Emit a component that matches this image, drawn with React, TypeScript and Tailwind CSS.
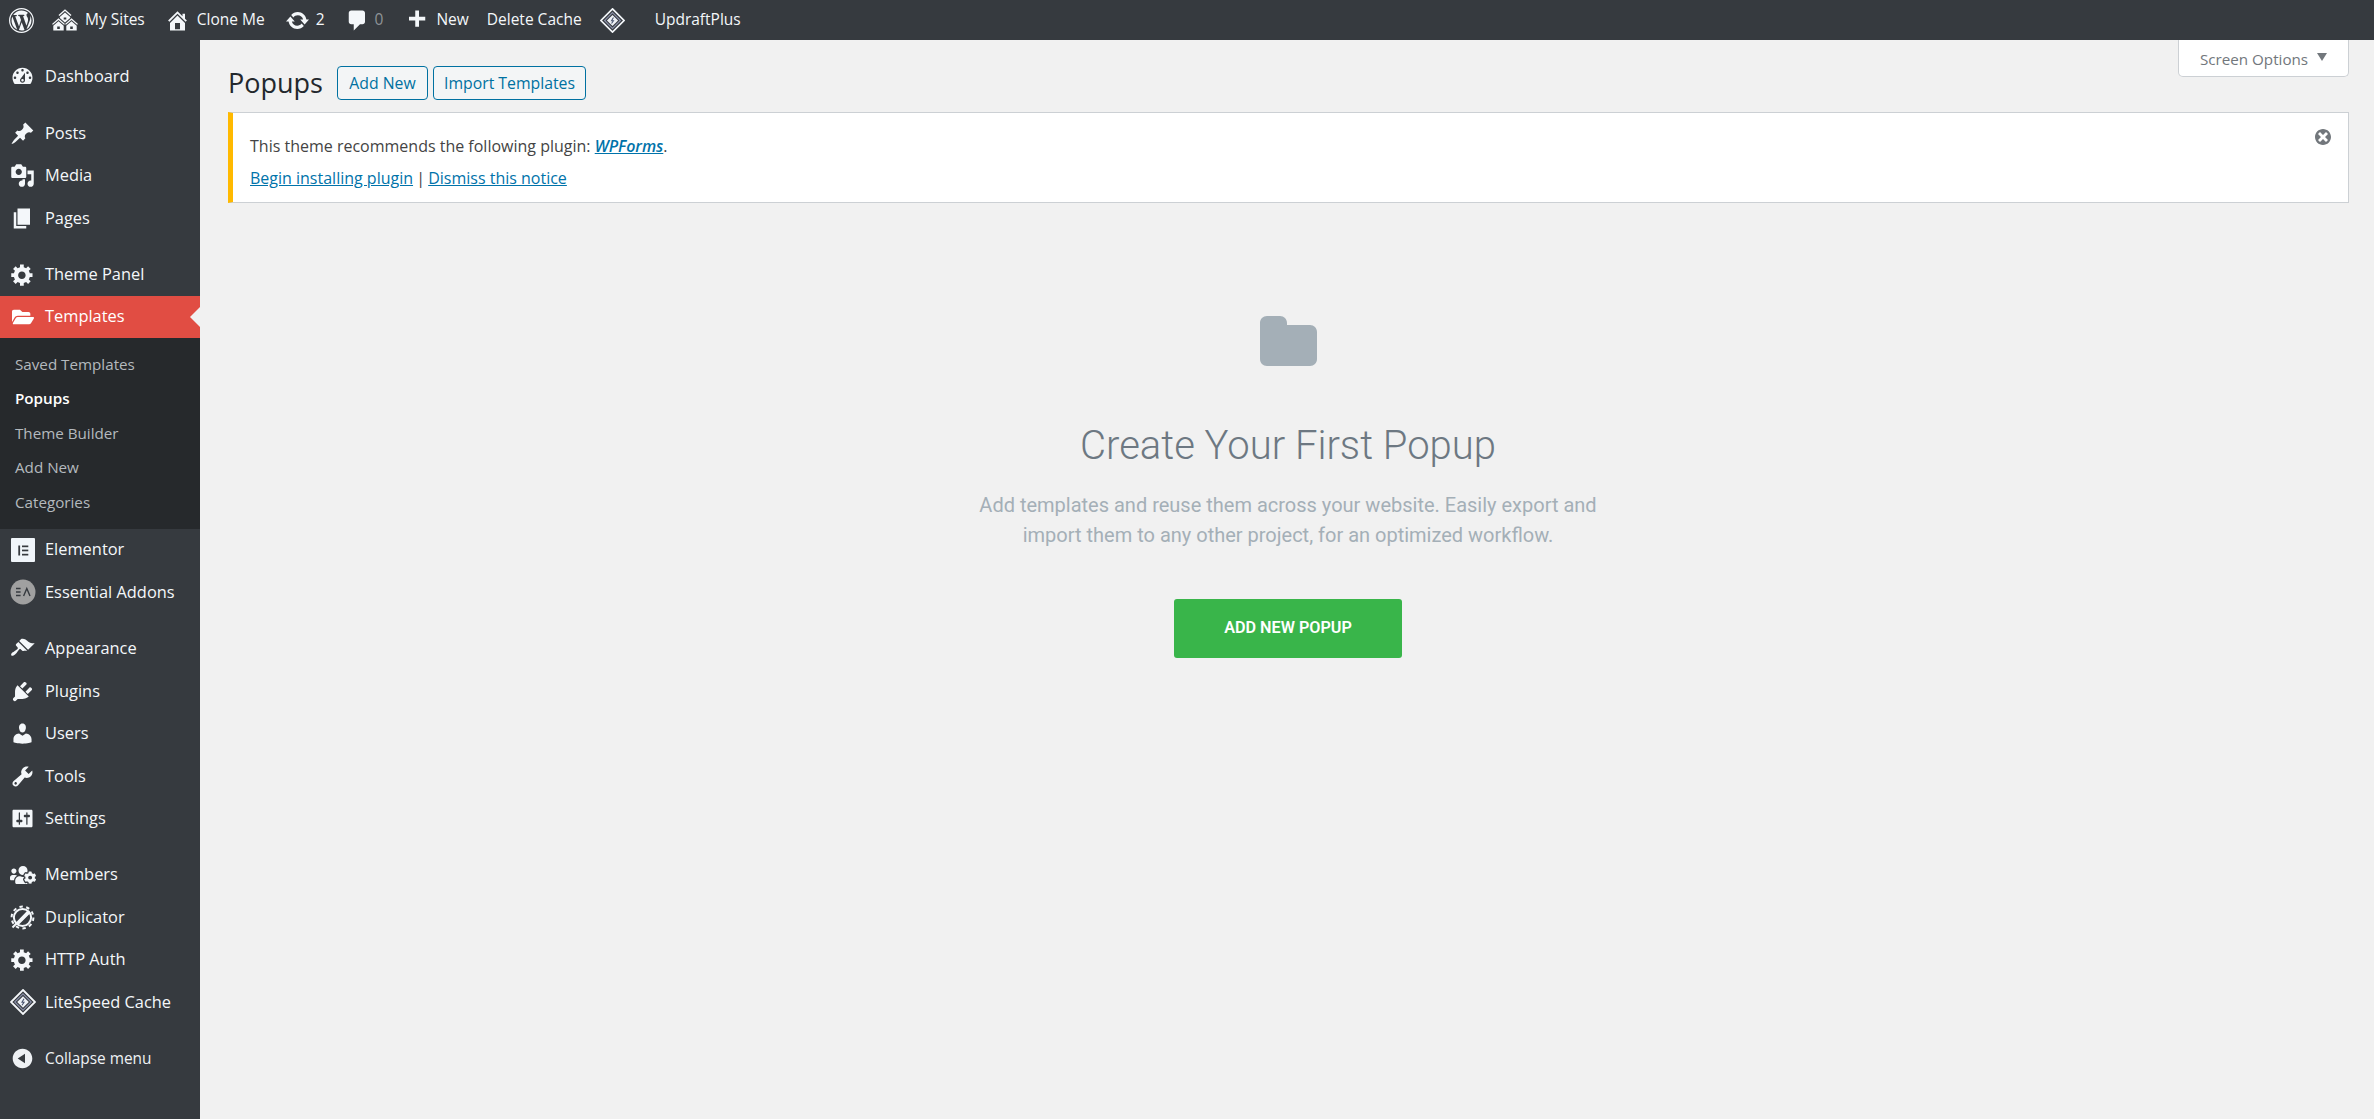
import type { ReactNode } from "react";
import { FaFolderOpen, FaUsersCog } from "react-icons/fa";

const ui = "font-['Open_Sans','Noto_Sans',sans-serif]";

const paths = {
  logo: "M20 10c0-5.52-4.48-10-10-10S0 4.48 0 10s4.48 10 10 10 10-4.48 10-10zM10 1.01c4.97 0 8.99 4.02 8.99 8.99s-4.02 8.99-8.99 8.99S1.01 14.97 1.01 10 5.03 1.01 10 1.01zM8.01 14.82L4.96 6.61c.49-.03 1.05-.08 1.05-.08.43-.05.38-1.01-.06-.99 0 0-1.29.1-2.13.1-.15 0-.33 0-.52-.01 1.44-2.17 3.9-3.6 6.7-3.6 2.09 0 3.99.79 5.41 2.09-.6-.08-1.45.35-1.45 1.42 0 .66.38 1.22.79 1.88.31.54.5 1.22.5 2.21 0 1.34-1.27 4.48-1.27 4.48l-2.71-7.5c.48-.03.75-.16.75-.16.43-.05.38-1.1-.05-1.08 0 0-1.3.11-2.14.11-.78 0-2.11-.11-2.11-.11-.43-.02-.48 1.06-.05 1.08l.84.08 1.12 3.04zm6.02 2.15L16.64 10s.67-1.69.39-3.81c.63 1.14.94 2.42.94 3.81 0 2.96-1.56 5.58-3.94 6.97zM2.68 6.77L6.5 17.25c-2.67-1.3-4.47-4.08-4.47-7.25 0-1.16.2-2.23.65-3.23zm7.45 4.53l2.29 6.25c-.75.27-1.57.42-2.42.42-.72 0-1.41-.11-2.06-.3z",
  sites: "M14.27 6.87L10 3.14 5.73 6.87 5 6.14l5-4.38 5 4.38zM14 8.42l-4.05 3.43L6 8.38v-.74l4-3.5 4 3.5v.78zM11 9.7V8H9v1.7h2zm-1.73 4.03L5 10 .73 13.73 0 13l5-4.38L10 13zm10 0L15 10l-4.27 3.73L10 13l5-4.38L20 13zM5 11l4 3.5V18H1v-3.5zm10 0l4 3.5V18h-8v-3.5zm-9 6v-2H4v2h2zm10 0v-2h-2v2h2z",
  home: "M16 8.5l1.53 1.53-1.06 1.06L10 4.62l-6.47 6.47-1.06-1.06L10 2.5l4 4v-2h2v4zm-6-2.46l6 5.99V18H4v-5.97zM12 17v-5H8v5h4z",
  update: "M10.2 3.28c3.53 0 6.43 2.61 6.92 6h2.08l-3.5 4-3.5-4h2.32c-.45-1.97-2.21-3.45-4.32-3.45-1.45 0-2.73.71-3.54 1.78L4.95 5.66C6.23 4.2 8.11 3.28 10.2 3.28zm-.4 13.44c-3.52 0-6.43-2.61-6.92-6H.8l3.5-4c1.17 1.33 2.33 2.67 3.5 4H5.48c.45 1.97 2.21 3.45 4.32 3.45 1.45 0 2.73-.71 3.54-1.78l1.71 1.95c-1.28 1.46-3.15 2.38-5.25 2.38z",
  comment: "M5 2h9c1.1 0 2 .9 2 2v7c0 1.1-.9 2-2 2h-2l-5 5v-5H5c-1.1 0-2-.9-2-2V4c0-1.1.9-2 2-2z",
  plus: "M17 7v3h-5v5H9v-5H4V7h5V2h3v5h5z",
  dashboard: "M3.76 16h12.48c1.1-1.37 1.76-3.11 1.76-5 0-4.42-3.58-8-8-8s-8 3.58-8 8c0 1.89.66 3.63 1.76 5zM10 4c.55 0 1 .45 1 1s-.45 1-1 1-1-.45-1-1 .45-1 1-1zM6 6c.55 0 1 .45 1 1s-.45 1-1 1-1-.45-1-1 .45-1 1-1zm8 0c.55 0 1 .45 1 1s-.45 1-1 1-1-.45-1-1 .45-1 1-1zm-5.37 5.55L12 7v6c0 1.1-.9 2-2 2s-2-.9-2-2c0-.57.24-1.08.63-1.45zM4 10c.55 0 1 .45 1 1s-.45 1-1 1-1-.45-1-1 .45-1 1-1zm12 0c.55 0 1 .45 1 1s-.45 1-1 1-1-.45-1-1 .45-1 1-1zm-5 3c0-.55-.45-1-1-1s-1 .45-1 1 .45 1 1 1 1-.45 1-1z",
  post: "M10.44 3.02l1.82-1.82 6.36 6.35-1.83 1.82c-1.05-.68-2.48-.57-3.41.36l-.75.75c-.92.93-1.04 2.35-.35 3.41l-1.83 1.82-2.41-2.41-2.8 2.79c-.42.42-3.38 2.71-3.8 2.29s1.86-3.39 2.28-3.81l2.79-2.79L4.1 9.36l1.83-1.82c1.05.69 2.48.57 3.4-.36l.75-.75c.93-.92 1.05-2.35.36-3.41z",
  media: "M13 11V4c0-.55-.45-1-1-1h-1.67L9 1H5L3.67 3H2c-.55 0-1 .45-1 1v7c0 .55.45 1 1 1h10c.55 0 1-.45 1-1zM7 4.5c1.38 0 2.5 1.12 2.5 2.5S8.38 9.5 7 9.5 4.5 8.38 4.5 7 5.62 4.5 7 4.5zM14 6h5v10.5c0 1.38-1.12 2.5-2.5 2.5S14 17.88 14 16.5s1.12-2.5 2.5-2.5c.17 0 .34.02.5.05V9h-3V6zm-4 8.05V13h2v3.5c0 1.38-1.12 2.5-2.5 2.5S7 17.88 7 16.5 8.12 14 9.5 14c.17 0 .34.02.5.05z",
  page: "M6 15V2h10v13H6zm-1 1h8v2H3V5h2v11z",
  gear: "M18 12h-2.18c-.17.7-.44 1.35-.81 1.93l1.54 1.54-2.1 2.1-1.54-1.54c-.58.36-1.23.63-1.91.79V19H8v-2.18c-.68-.16-1.33-.43-1.91-.79l-1.54 1.54-2.12-2.12 1.54-1.54c-.36-.58-.63-1.23-.79-1.91H1V9.03h2.17c.16-.7.44-1.35.8-1.94L2.43 5.55l2.1-2.1 1.54 1.54c.58-.37 1.24-.64 1.93-.81V2h3v2.18c.68.16 1.33.43 1.91.79l1.54-1.54 2.12 2.12-1.54 1.54c.36.59.64 1.24.8 1.94H18V12zm-8.5 1.5c1.66 0 3-1.34 3-3s-1.34-3-3-3-3 1.34-3 3 1.34 3 3 3z",
  appearance: "M14.48 11.06L7.41 3.99l1.5-1.5c.5-.56 2.3-.47 3.51.32 1.21.8 1.43 1.28 2.91 2.1 1.18.64 2.45 1.26 4.45.85zm-.71.71L6.7 4.7 4.93 6.47c-.39.39-.39 1.02 0 1.41l1.06 1.06c.39.39.39 1.03 0 1.42-.6.6-1.43 1.11-2.21 1.69-.35.26-.7.53-1.01.84C1.43 13.23.4 14.91 1.1 15.6c.7.7 2.38-.33 3.72-1.67.31-.31.58-.66.84-1.01.58-.78 1.09-1.61 1.69-2.21.39-.39 1.02-.39 1.41 0l1.06 1.06c.39.39 1.02.39 1.41 0z",
  plugins: "M13.11 4.36L9.87 7.6 8 5.73l3.24-3.24c.35-.34 1.05-.2 1.56.32.52.51.66 1.21.31 1.55zm-8 1.77l.91-1.12 9.01 9.01-1.19.84c-.71.71-2.63 1.16-3.82 1.16H6.14L4.9 17.26c-.59.59-1.54.59-2.12 0-.59-.58-.59-1.53 0-2.12l1.24-1.24v-3.88c0-1.13.4-3.19 1.09-3.89zm7.26 3.97l3.24-3.24c.34-.35 1.04-.21 1.55.31.52.51.66 1.21.31 1.55l-3.24 3.25z",
  users: "M10 9.25c-2.27 0-2.73-3.44-2.73-3.44C7 4.02 7.82 2 9.97 2c2.16 0 2.98 2.02 2.71 3.81 0 0-.41 3.44-2.68 3.44zm0 2.57L12.72 10c2.39 0 4.52 2.33 4.52 4.53v2.49s-3.65 1.13-7.24 1.13c-3.65 0-7.24-1.13-7.24-1.13v-2.49c0-2.25 1.94-4.48 4.47-4.48z",
  tools: "M16.68 9.77c-1.34 1.34-3.3 1.67-4.95.99l-5.41 6.52c-.99.99-2.59.99-3.58 0s-.99-2.59 0-3.57l6.52-5.42c-.68-1.65-.35-3.61.99-4.95 1.28-1.28 3.12-1.62 4.72-1.06l-2.89 2.89 2.82 2.82 2.86-2.87c.53 1.58.18 3.39-1.08 4.65zM3.81 16.21c.4.39 1.04.39 1.43 0 .4-.4.4-1.04 0-1.43-.39-.4-1.03-.4-1.43 0-.39.39-.39 1.03 0 1.43z",
  settings: "M18 16V4c0-.55-.45-1-1-1H3c-.55 0-1 .45-1 1v12c0 .55.45 1 1 1h14c.55 0 1-.45 1-1zM8 11h1c.55 0 1 .45 1 1s-.45 1-1 1H8v1.5c0 .28-.22.5-.5.5s-.5-.22-.5-.5V13H6c-.55 0-1-.45-1-1s.45-1 1-1h1V5.5c0-.28.22-.5.5-.5s.5.22.5.5V11zm5-2h-1c-.55 0-1-.45-1-1s.45-1 1-1h1V5.5c0-.28.22-.5.5-.5s.5.22.5.5V7h1c.55 0 1 .45 1 1s-.45 1-1 1h-1v5.5c0 .28-.22.5-.5.5s-.5-.22-.5-.5V9z",
  collapse: "M10 2.16c4.33 0 7.84 3.51 7.84 7.84s-3.51 7.84-7.84 7.84S2.16 14.33 2.16 10 5.71 2.16 10 2.16zm2 11.72V6.12L6.18 9.97z",
  dismiss: "M10 2c4.42 0 8 3.58 8 8s-3.58 8-8 8-8-3.58-8-8 3.58-8 8-8zm5 11l-3-3 3-3-2-2-3 3-3-3-2 2 3 3-3 3 2 2 3-3 3 3z",
};

function Dash({ d, className = "h-[25px] w-[25px]" }: { d: string; className?: string }) {
  return (
    <svg viewBox="0 0 20 20" className={className} fill="currentColor" fillRule="evenodd">
      <path d={d} />
    </svg>
  );
}

function LiteSpeed({ className }: { className: string }) {
  return (
    <svg viewBox="0 0 26 26" className={className}>
      <path d="M13 1 25 13 13 25 1 13Z" fill="none" stroke="#f4f7fa" strokeWidth="1.8" />
      <path d="M13 4.8 21.2 13 13 21.2 4.8 13Z" fill="none" stroke="#8a8fa8" strokeWidth="1.2" />
      <path d="M13 7.2 18.8 13 13 18.8 7.2 13Z" fill="#eef1f6" />
      <path d="M14 9.8 12 13.2h2L12 16.2" fill="none" stroke="#4a5570" strokeWidth="1.1" />
    </svg>
  );
}

function Duplicator() {
  return (
    <svg viewBox="0 0 25 25" className="h-[25px] w-[25px]" fill="none" stroke="currentColor">
      <circle cx="12.5" cy="12.5" r="8.6" strokeWidth="2" />
      <circle cx="12.5" cy="12.5" r="10.9" strokeWidth="2" strokeDasharray="3.4 3.45" />
      <path d="M2.5 22.5 18 6.5M7.5 19.5 20 7" strokeWidth="2" />
    </svg>
  );
}

function ElementorIcon() {
  return (
    <span className="flex h-6 w-6 items-center justify-center rounded-[1px] bg-[#f0f5fa]">
      <svg viewBox="0 0 24 24" className="h-6 w-6" fill="#363a3f">
        <rect x="7.3" y="7.5" width="1.8" height="10" />
        <rect x="11" y="7.5" width="6.3" height="1.7" />
        <rect x="11" y="11.6" width="6.3" height="1.7" />
        <rect x="11" y="15.8" width="6.3" height="1.7" />
      </svg>
    </span>
  );
}

function EssentialIcon() {
  return (
    <svg viewBox="0 0 26 26" className="h-[26px] w-[26px]">
      <circle cx="13" cy="13" r="12.5" fill="#a0a0a0" />
      <path d="M6 9.5h4.6M6 13h4.6M6 16.5h4.6" stroke="#363a3f" strokeWidth="1.4" />
      <path d="M13.6 17 16.8 9.5 20 17" stroke="#363a3f" strokeWidth="1.4" fill="none" />
    </svg>
  );
}

type Row = { label: string; icon: ReactNode; active?: boolean };

const groupA: Row[] = [{ label: "Dashboard", icon: <Dash d={paths.dashboard} /> }];
const groupB: Row[] = [
  { label: "Posts", icon: <Dash d={paths.post} /> },
  { label: "Media", icon: <Dash d={paths.media} /> },
  { label: "Pages", icon: <Dash d={paths.page} /> },
];
const groupC: Row[] = [
  { label: "Theme Panel", icon: <Dash d={paths.gear} /> },
  { label: "Templates", icon: <FaFolderOpen className="h-[20px] w-[22px]" />, active: true },
];
const subItems = ["Saved Templates", "Popups", "Theme Builder", "Add New", "Categories"];
const groupD: Row[] = [
  { label: "Elementor", icon: <ElementorIcon /> },
  { label: "Essential Addons", icon: <EssentialIcon /> },
];
const groupE: Row[] = [
  { label: "Appearance", icon: <Dash d={paths.appearance} /> },
  { label: "Plugins", icon: <Dash d={paths.plugins} /> },
  { label: "Users", icon: <Dash d={paths.users} /> },
  { label: "Tools", icon: <Dash d={paths.tools} /> },
  { label: "Settings", icon: <Dash d={paths.settings} /> },
];
const groupF: Row[] = [
  { label: "Members", icon: <FaUsersCog className="h-[22px] w-[26px]" /> },
  { label: "Duplicator", icon: <Duplicator /> },
  { label: "HTTP Auth", icon: <Dash d={paths.gear} /> },
  { label: "LiteSpeed Cache", icon: <LiteSpeed className="h-[26px] w-[26px]" /> },
];

function MenuRow({ row }: { row: Row }) {
  return (
    <a
      className={`relative flex h-[42.5px] items-center text-[16.4px] text-[#f4f7fa] ${
        row.active ? "bg-[#e14d43] text-white" : ""
      }`}
    >
      <span className="flex w-[45px] shrink-0 items-center justify-center">{row.icon}</span>
      <span>{row.label}</span>
      {row.active && (
        <span className="absolute right-0 top-1/2 -mt-[10px] h-0 w-0 border-y-[10px] border-r-[10px] border-y-transparent border-r-[#f1f1f1]" />
      )}
    </a>
  );
}

function Group({ rows }: { rows: Row[] }) {
  return (
    <>
      {rows.map((r) => (
        <MenuRow key={r.label} row={r} />
      ))}
    </>
  );
}

function Sidebar() {
  return (
    <aside className="w-[200px] shrink-0 bg-[#363a3f] pt-[15.5px]">
      <Group rows={groupA} />
      <div className="h-[13.75px]" />
      <Group rows={groupB} />
      <div className="h-[13.75px]" />
      <Group rows={groupC} />
      <ul className="bg-[#26292c] py-[9px]">
        {subItems.map((s) => (
          <li
            key={s}
            className={`flex h-[34.5px] items-center pl-[15px] text-[15.2px] ${
              s === "Popups" ? "font-semibold text-white" : "text-[#b4b9be]"
            }`}
          >
            {s}
          </li>
        ))}
      </ul>
      <Group rows={groupD} />
      <div className="h-[13.75px]" />
      <Group rows={groupE} />
      <div className="h-[13.75px]" />
      <Group rows={groupF} />
      <div className="h-[13.75px]" />
      <a className="flex h-[42.5px] items-center text-[15.4px] text-[#eef1f4]">
        <span className="flex w-[45px] shrink-0 items-center justify-center">
          <Dash d={paths.collapse} />
        </span>
        Collapse menu
      </a>
    </aside>
  );
}

function AdminBar() {
  return (
    <header className="flex h-10 items-center bg-[#363a3f] text-[15.5px] text-[#f4f7fa]">
      <span className="ml-[9px]"><Dash d={paths.logo} /></span>
      <span className="ml-[18px]"><Dash d={paths.sites} className="h-[26px] w-[26px]" /></span>
      <span className="ml-[7px]">My Sites</span>
      <span className="ml-[20px]"><Dash d={paths.home} /></span>
      <span className="ml-[7px]">Clone Me</span>
      <span className="ml-[20px]"><Dash d={paths.update} /></span>
      <span className="ml-[6px]">2</span>
      <span className="ml-[20px]"><Dash d={paths.comment} /></span>
      <span className="ml-[5px] text-[#8f9397]">0</span>
      <span className="ml-[21px]"><Dash d={paths.plus} /></span>
      <span className="ml-[7px]">New</span>
      <span className="ml-[18px]">Delete Cache</span>
      <span className="ml-[18px]"><LiteSpeed className="h-[25px] w-[25px]" /></span>
      <span className="ml-[30px]">UpdraftPlus</span>
    </header>
  );
}

function PageHead() {
  const btn =
    "flex h-[34px] items-center justify-center rounded-[4px] border border-[#0071a1] bg-[#f3f5f6] pt-[2px] text-[15.8px] font-medium text-[#0071a1]";
  return (
    <div className="flex h-9 items-center">
      <h1 className="w-[109px] text-[27px] font-normal leading-[38px] text-[#23282d]">Popups</h1>
      <a className={`${btn} w-[91px]`}>Add New</a>
      <a className={`${btn} ml-[5px] w-[153px]`}>Import Templates</a>
    </div>
  );
}

function Notice() {
  return (
    <div className="relative mt-[11px] h-[91px] border border-l-[5px] border-[#ccd0d4] border-l-[#ffb900] bg-white pl-[17px] text-[16px] font-medium text-[#444]">
      <p className="pt-[21px] leading-[24px]">
        This theme recommends the following plugin:{" "}
        <a className="font-semibold italic text-[#0073aa] underline">WPForms</a>.
      </p>
      <p className="mt-[8px] leading-[24px]">
        <a className="text-[#0073aa] underline">Begin installing plugin</a>{" "}
        <span className="-mx-[1px]">|</span>{" "}
        <a className="text-[#0073aa] underline">Dismiss this notice</a>
      </p>
      <span className="absolute right-[15px] top-[14px] text-[#72777c]">
        <Dash d={paths.dismiss} className="h-5 w-5" />
      </span>
    </div>
  );
}

function EmptyState() {
  return (
    <section className="mr-[1px] flex flex-col items-center pt-[113px] font-['Roboto',sans-serif]">
      <svg viewBox="0 0 57 50" className="h-[50px] w-[57px]" fill="#a4afb7">
        <path d="M7 0h13c4 0 7 3 7 7v2h23c4 0 7 3 7 7v27c0 4-3 7-7 7H7c-4 0-7-3-7-7V7c0-4 3-7 7-7Z" />
      </svg>
      <h2 className="mt-[50px] text-[40px] font-light leading-[60px] text-[#6d7882]">Create Your First Popup</h2>
      <p className="mt-[14px] w-[640px] text-center text-[20px] font-normal leading-[30px] text-[#a4afb7]">
        Add templates and reuse them across your website. Easily export and import them to any other project, for an optimized workflow.
      </p>
      <a className="mt-[49px] flex h-[59px] w-[228px] items-center justify-center rounded-[3px] bg-[#39b54a] text-[16.2px] font-semibold uppercase text-white">
        Add New Popup
      </a>
    </section>
  );
}

export default function App() {
  return (
    <div className={`flex h-[1119px] flex-col overflow-hidden bg-[#f1f1f1] ${ui}`}>
      <AdminBar />
      <div className="flex min-h-0 flex-1">
        <Sidebar />
        <main className="relative flex-1 pl-[28px] pr-[25px] pt-[25px]">
          <button className="absolute right-[25px] top-0 flex h-[37px] w-[171px] items-center justify-center gap-[9px] rounded-b-[5px] border border-t-0 border-[#ccd0d4] bg-white pt-[2px] text-[15.2px] text-[#72777c]">
            Screen Options
            <span className="mb-[4px] h-0 w-0 border-x-[5px] border-t-[8px] border-x-transparent border-t-[#72777c]" />
          </button>
          <PageHead />
          <Notice />
          <EmptyState />
        </main>
      </div>
    </div>
  );
}
